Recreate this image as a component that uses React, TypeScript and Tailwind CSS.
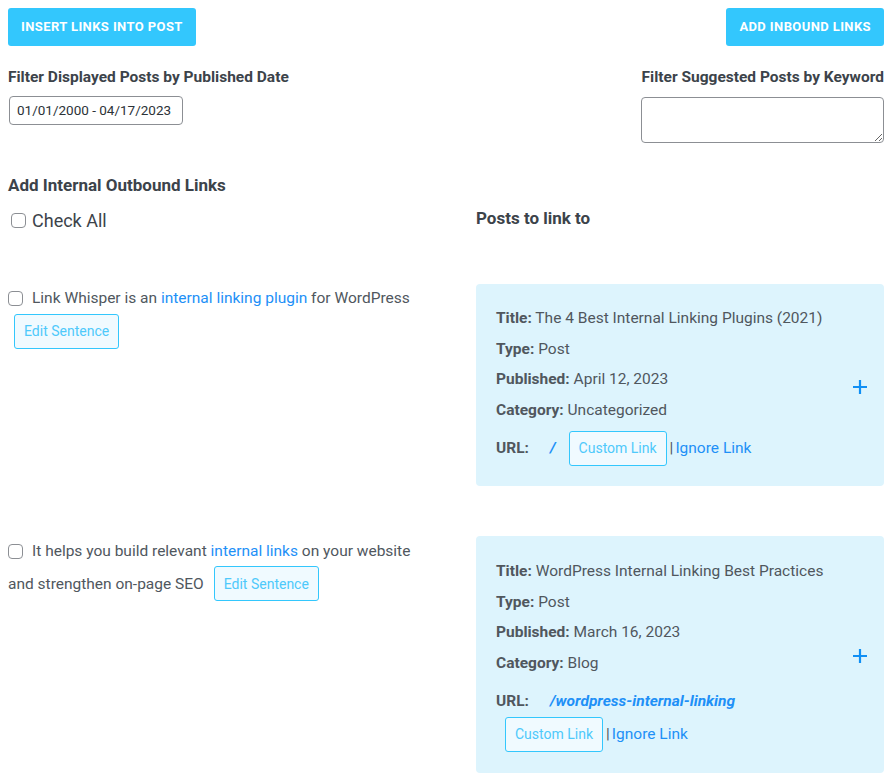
import React from "react";

const font = { fontFamily: "Roboto, 'Liberation Sans', sans-serif" };

function Plus() {
  return (
    <svg width="16" height="16" viewBox="0 0 16 16" className="shrink-0">
      <path d="M8 1v14M1 8h14" stroke="#0f8ff5" strokeWidth="2.2" />
    </svg>
  );
}

function Box() {
  return (
    <span className="inline-block h-[15px] w-[15px] shrink-0 rounded-[4px] border border-[#8c8f94] bg-white" />
  );
}

function Field({ label, value }: { label: string; value: string }) {
  return (
    <div className="leading-[20px]">
      <span className="font-bold text-[#50575e]">{label}:</span>{" "}
      <span className="text-[#50575e]">{value}</span>
    </div>
  );
}

function SmallButton({ children }: { children: React.ReactNode }) {
  return (
    <span className="inline-flex h-[35px] items-center rounded-[3px] border border-[#33c7fd] bg-[#f0faff] px-[9px] text-[14px] text-[#4ec9fb]">
      {children}
    </span>
  );
}

export default function App() {
  return (
    <div className="min-h-screen bg-white pl-2 pr-[10px] pt-2 text-[15.5px] text-[#50575e]" style={font}>
      <div className="flex items-start justify-between">
        <button className="h-[38px] rounded-[3px] bg-[#33c7fd] px-[13px] text-[13px] font-bold tracking-[0.4px] text-white">
          INSERT LINKS INTO POST
        </button>
        <button className="h-[38px] rounded-[3px] bg-[#33c7fd] px-[13px] text-[13px] font-bold tracking-[0.4px] text-white">
          ADD INBOUND LINKS
        </button>
      </div>

      <div className="mt-[22px] flex items-start justify-between">
        <div>
          <div className="text-[15.5px] font-bold leading-[18px] text-[#3c434a]">
            Filter Displayed Posts by Published Date
          </div>
          <div className="ml-px mt-[10px] flex h-[29px] w-[174px] items-center whitespace-nowrap rounded-[4px] border border-[#8c8f94] px-[7px] text-[13.5px] text-[#2c3338]">
            01/01/2000 - 04/17/2023
          </div>
        </div>
        <div className="flex flex-col items-end">
          <div className="text-[15.5px] font-bold leading-[18px] text-[#3c434a]">
            Filter Suggested Posts by Keyword
          </div>
          <textarea className="mt-[11px] h-[46px] w-[243px] rounded-[4px] border border-[#8c8f94] outline-none" />
        </div>
      </div>

      <div className="mt-[32px] text-[17px] font-bold leading-[20px] text-[#3c434a]">
        Add Internal Outbound Links
      </div>

      <div className="grid grid-cols-[468px_1fr]">
        <div className="ml-[3px] mt-[12px] flex items-center gap-[6px] text-[18px] text-[#3c434a]">
          <Box />
          Check All
        </div>
        <div className="mt-[11px] text-[17px] font-bold text-[#3c434a]">Posts to link to</div>
      </div>

      <div className="mt-[50px] grid grid-cols-[468px_1fr]">
        <div className="pt-[3px]">
          <div className="flex items-center gap-[9px]">
            <Box />
            <span>
              Link Whisper is an <a className="text-[#1e90f7]">internal linking plugin</a> for WordPress
            </span>
          </div>
          <div className="ml-[6px] mt-[4px]">
            <SmallButton>Edit Sentence</SmallButton>
          </div>
        </div>
        <div className="flex items-center justify-between rounded-[4px] bg-[#ddf4fd] pb-[20px] pl-[20px] pr-[16px] pt-[24px]">
          <div className="flex flex-col gap-[10.5px]">
            <Field label="Title" value="The 4 Best Internal Linking Plugins (2021)" />
            <Field label="Type" value="Post" />
            <Field label="Published" value="April 12, 2023" />
            <Field label="Category" value="Uncategorized" />
            <div className="mt-[1px] flex items-center">
              <span className="w-[54px] font-bold">URL:</span>
              <span className="mr-[13px] font-bold italic text-[#1e90f7]">/</span>
              <SmallButton>Custom Link</SmallButton>
              <span className="ml-[3px]">|</span>
              <a className="ml-[2px] text-[#1e90f7]">Ignore Link</a>
            </div>
          </div>
          <Plus />
        </div>
      </div>

      <div className="mt-[50px] grid grid-cols-[468px_1fr]">
        <div className="leading-[30px]">
          <div className="flex items-center gap-[9px]">
            <Box />
            <span>
              It helps you build relevant <a className="text-[#1e90f7]">internal links</a> on your website
            </span>
          </div>
          <div className="flex items-center gap-[10px]">
            <span>and strengthen on-page SEO</span>
            <SmallButton>Edit Sentence</SmallButton>
          </div>
        </div>
        <div className="flex items-center justify-between rounded-[4px] bg-[#ddf4fd] pb-[21px] pl-[20px] pr-[16px] pt-[25px]">
          <div className="flex flex-col gap-[10.5px]">
            <Field label="Title" value="WordPress Internal Linking Best Practices" />
            <Field label="Type" value="Post" />
            <Field label="Published" value="March 16, 2023" />
            <Field label="Category" value="Blog" />
            <div className="mt-[7px] flex items-center">
              <span className="w-[54px] font-bold">URL:</span>
              <span className="font-bold italic text-[#1e90f7]">/wordpress-internal-linking</span>
            </div>
            <div className="-mt-[7px] ml-[9px] flex items-center">
              <SmallButton>Custom Link</SmallButton>
              <span className="ml-[3px]">|</span>
              <a className="ml-[2px] text-[#1e90f7]">Ignore Link</a>
            </div>
          </div>
          <Plus />
        </div>
      </div>
    </div>
  );
}
